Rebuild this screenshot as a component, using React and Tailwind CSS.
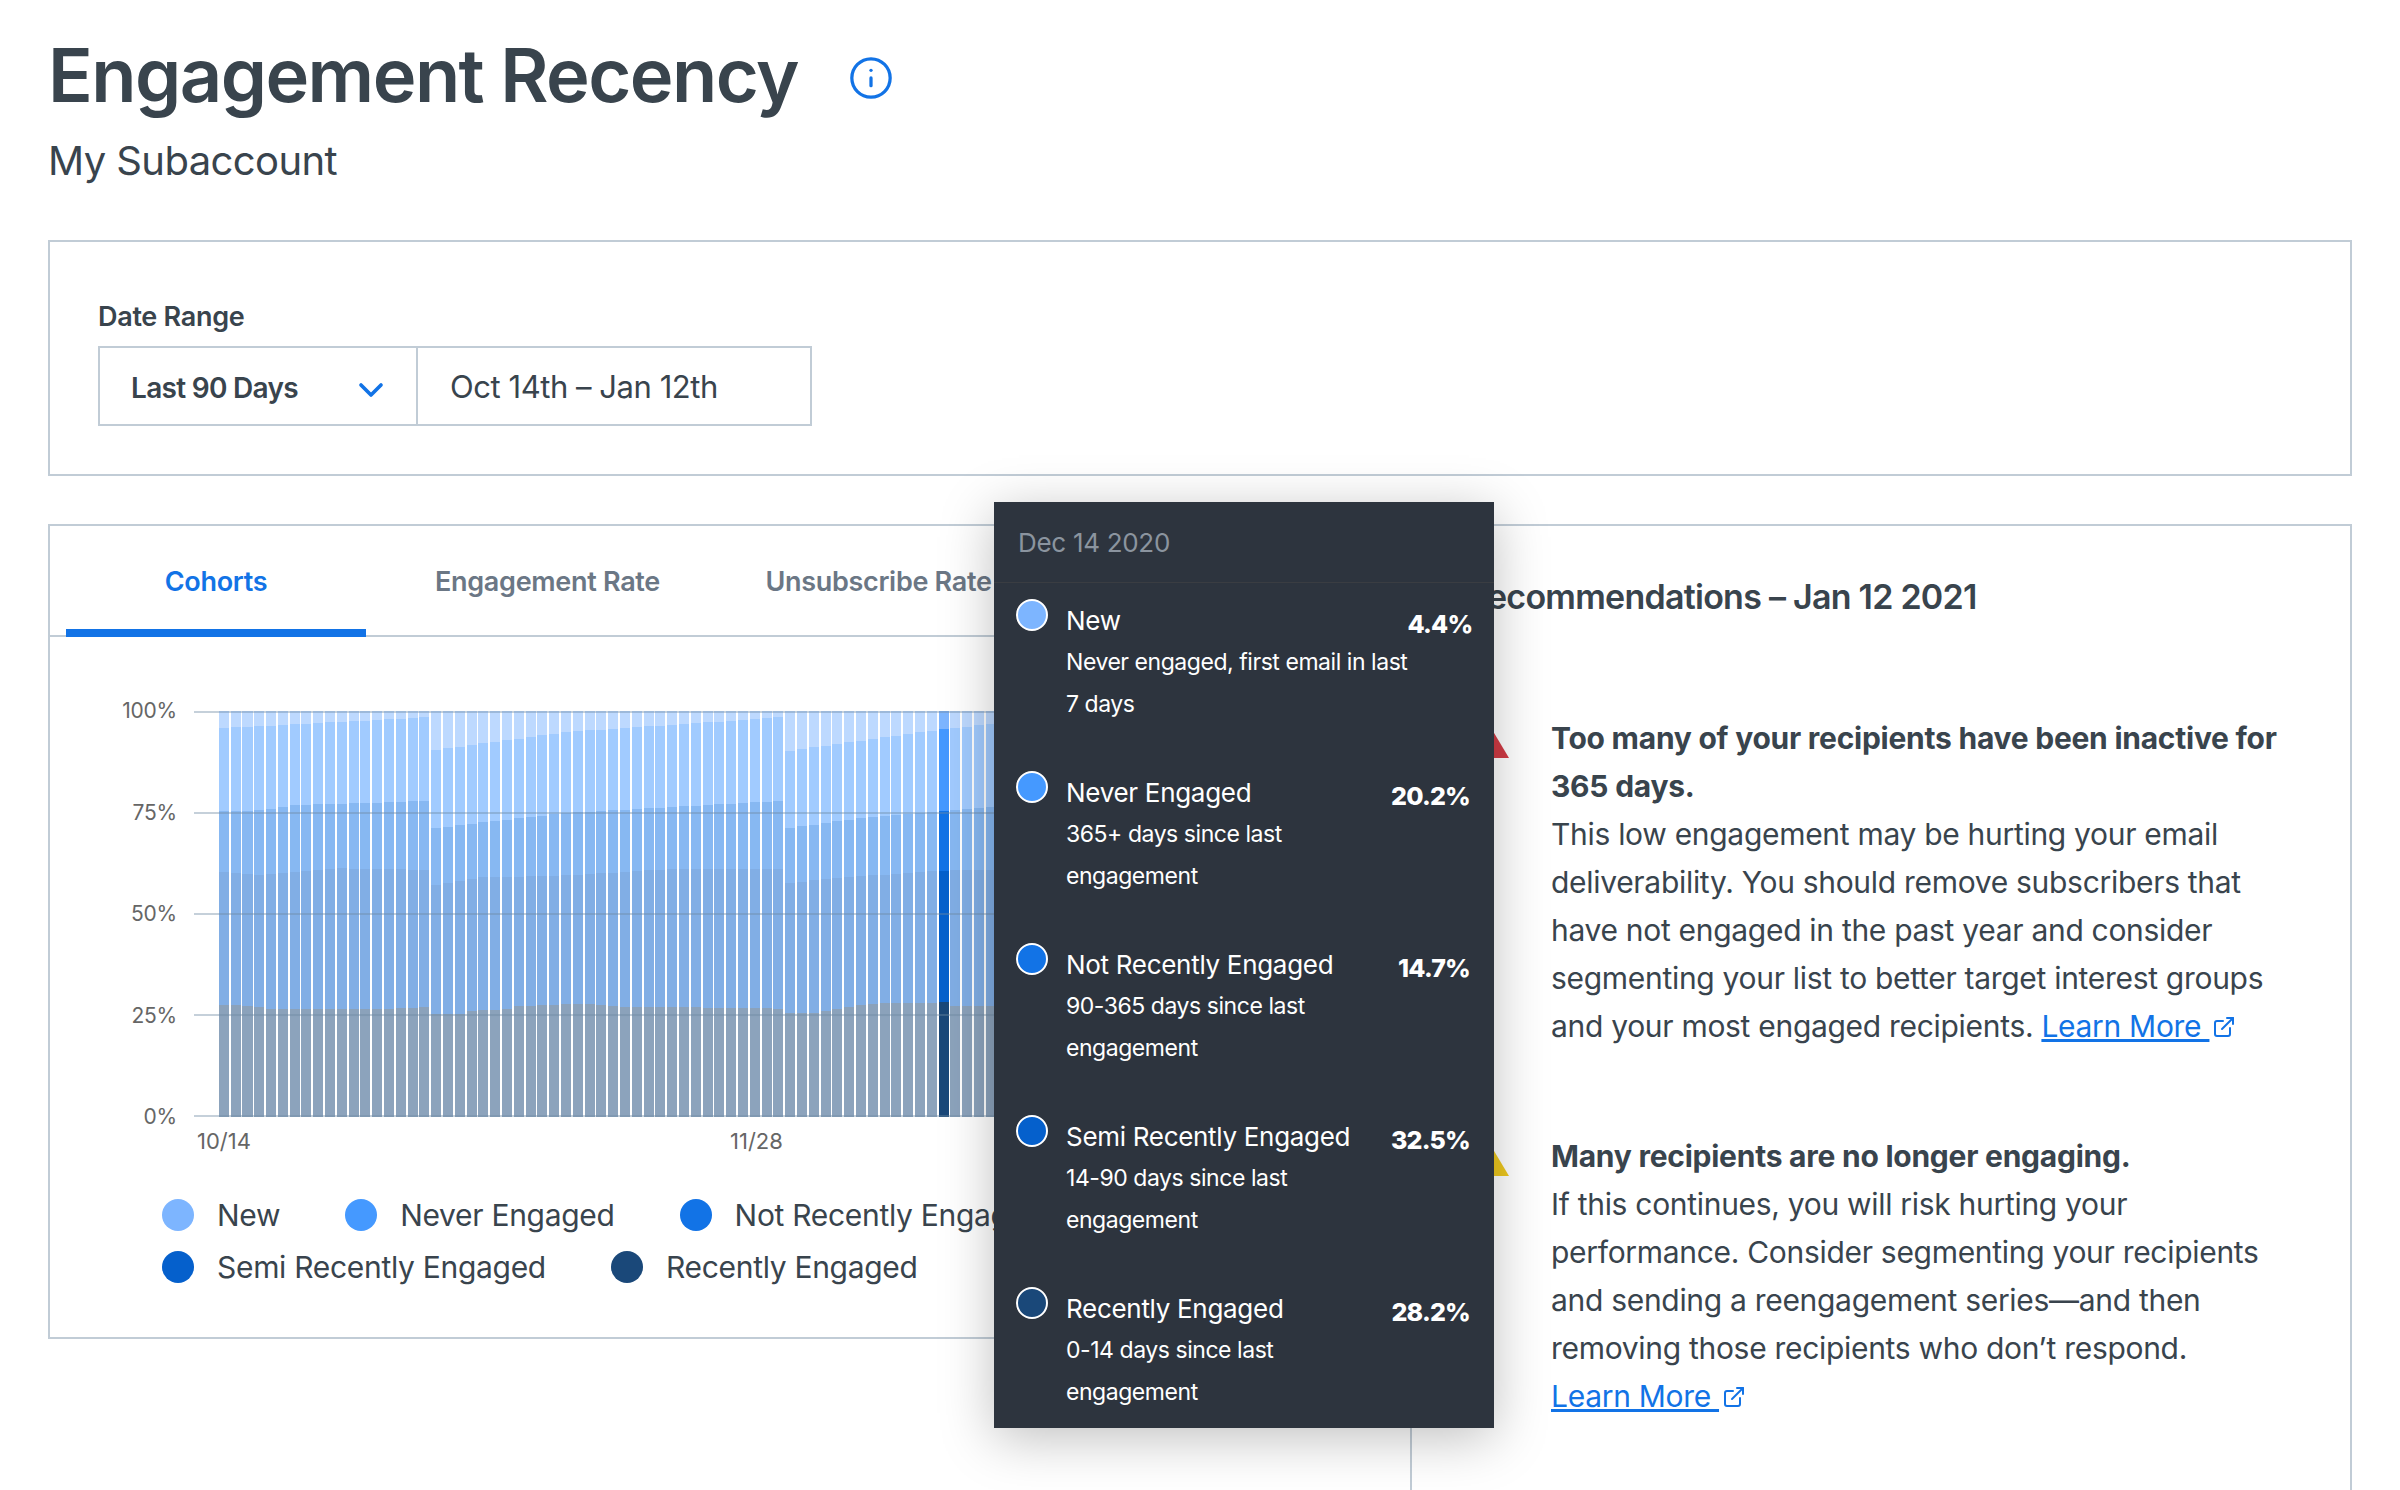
import { ChevronDown, ExternalLink, Info } from 'lucide-react';

const LEGEND = [
    { name: 'New', color: 'bg-[#7db5ff]' },
    { name: 'Never Engaged', color: 'bg-[#4599ff]' },
    { name: 'Not Recently Engaged', color: 'bg-[#1273e6]' },
    { name: 'Semi Recently Engaged', color: 'bg-[#0560cc]' },
    { name: 'Recently Engaged', color: 'bg-[#1a4879]' },
];

const TOOLTIP_ROWS = [
    { name: 'New', color: 'bg-[#7db5ff]', pct: '4.4%', lines: ['Never engaged, first email in last', '7 days'] },
    { name: 'Never Engaged', color: 'bg-[#4599ff]', pct: '20.2%', lines: ['365+ days since last', 'engagement'] },
    { name: 'Not Recently Engaged', color: 'bg-[#1273e6]', pct: '14.7%', lines: ['90-365 days since last', 'engagement'] },
    { name: 'Semi Recently Engaged', color: 'bg-[#0560cc]', pct: '32.5%', lines: ['14-90 days since last', 'engagement'] },
    { name: 'Recently Engaged', color: 'bg-[#1a4879]', pct: '28.2%', lines: ['0-14 days since last', 'engagement'] },
];

// cumulative % from the top of the bar, [day index, value]
const NEW_TOP = [[0, 4.2], [17, 1.6], [18, 9.6], [29, 5.2], [47, 1.6], [48, 9.8], [61, 4.4], [66, 3], [90, 1.5]];
const NEVER_TOP = [[0, 24.7], [3, 24.5], [6, 23.2], [17, 22.2], [18, 28.8], [29, 25.1], [47, 22.2], [48, 28.8], [55, 26], [61, 24.6], [66, 23.5], [90, 22]];
const NOT_TOP = [[0, 39.6], [3, 40.3], [10, 38.8], [17, 39.1], [18, 42.9], [22, 41], [29, 40.5], [38, 38.9], [47, 38.9], [48, 42.4], [52, 41.1], [61, 39.3], [66, 39], [90, 39]];
const RECENT = [[0, 27.6], [3, 27.2], [4, 26.7], [13, 26.6], [17, 27], [18, 25.3], [20, 25.3], [21, 26.1], [24, 26.6], [25, 27.3], [30, 27.9], [34, 27.2], [40, 27], [47, 26.7], [48, 25.5], [50, 25.7], [52, 26.7], [55, 27.9], [61, 28.2], [62, 27.4], [90, 27.4]];

function interp(points, i) {
    for (let p = 1; p < points.length; p++) {
        if (i <= points[p][0]) {
            const [x0, y0] = points[p - 1];
            const [x1, y1] = points[p];
            return y0 + ((i - x0) / (x1 - x0)) * (y1 - y0);
        }
    }
    return points[points.length - 1][1];
}

const BARS = Array.from({ length: 91 }, (_, i) => {
    const a = interp(NEW_TOP, i);
    const b = interp(NEVER_TOP, i);
    const c = interp(NOT_TOP, i);
    const r = interp(RECENT, i);
    return [a, b - a, c - b, 100 - c - r, r];
});

const SEGMENT_COLORS = ['bg-[#7db5ff]', 'bg-[#4599ff]', 'bg-[#1273e6]', 'bg-[#0560cc]', 'bg-[#1a4879]'];

function Chart() {
    return (
        <div className="flex pt-[74px] pr-[50px]">
            <div className="w-[111px] h-[406px] flex flex-col justify-between items-end text-[21px] tracking-[-0.2px] text-[#666]">
                {['100%', '75%', '50%', '25%', '0%'].map((label) => (
                    <div key={label} className="h-0 flex items-center">{label}</div>
                ))}
            </div>
            <div className="ml-[17px] flex-1">
                <div className="relative h-[406px] pl-[24px]">
                    <div className="flex h-full w-[1074px]">
                        {BARS.map((segs, i) => (
                            <div key={i} className={`flex-1 mx-[0.9px] flex flex-col ${i === 61 ? '' : 'opacity-50'}`}>
                                {segs.map((s, j) => (
                                    <div key={j} className={SEGMENT_COLORS[j]} style={{ height: `${s}%` }} />
                                ))}
                            </div>
                        ))}
                    </div>
                    <div className="absolute inset-0 flex flex-col justify-between">
                        {[0, 1, 2, 3, 4].map((i) => (
                            <div key={i} className="h-[2px] bg-[#6f8aa3]/40" />
                        ))}
                    </div>
                </div>
                <div className="relative h-[50px] text-[22px] text-[#666]">
                    <span className="absolute left-[3px] top-[8px]">10/14</span>
                    <span className="absolute left-[536px] top-[8px]">11/28</span>
                </div>
            </div>
        </div>
    );
}

function Tooltip() {
    return (
        <div className="absolute left-[994px] top-[502px] w-[500px] h-[926px] bg-[#2d343e] text-white shadow-[0_10px_50px_rgba(0,0,0,0.25)]">
            <div className="h-[81px] pl-[24px] flex items-center border-b border-[#3a3d42] text-[26px] text-[#8b949f] tracking-[-0.3px]">Dec 14 2020</div>
            <div className="pt-[16px] pl-[22px] pr-[24px] flex flex-col gap-[46px]">
                {TOOLTIP_ROWS.map((row) => (
                    <div key={row.name} className="flex">
                        <div className={`shrink-0 w-[32px] h-[32px] rounded-full border-2 border-white ${row.color}`} />
                        <div className="ml-[18px] flex-1">
                            <div className="h-[42px] leading-[44px] text-[26px] tracking-[-0.3px]">{row.name}</div>
                            {row.lines.map((line) => (
                                <div key={line} className="h-[42px] leading-[42px] text-[23px] tracking-[-0.45px] whitespace-nowrap">{line}</div>
                            ))}
                        </div>
                        <div className="mt-[4px] h-[42px] leading-[42px] text-[25px] font-extrabold tracking-[-0.8px]">{row.pct}</div>
                    </div>
                ))}
            </div>
        </div>
    );
}

function Warning({ color }) {
    return (
        <svg width="43" height="36" viewBox="0 0 43 36" className="shrink-0 mt-[8px]">
            <path d="M21.5 0 L43 36 L0 36 Z" fill={color} />
        </svg>
    );
}

function LearnMore() {
    return (
        <a className="text-[#1273e6] whitespace-nowrap">
            <span className="underline">Learn More </span>
            <ExternalLink size={24} strokeWidth={2} className="inline-block ml-[3px] mb-[3px]" />
        </a>
    );
}

export default function App() {
    return (
        <div className="relative h-[1490px] overflow-hidden bg-white px-[48px] text-[#39444d] font-['Inter',sans-serif]">
            <div className="pt-[25px] flex items-center">
                <h1 className="text-[74px] leading-[100px] font-semibold tracking-[-1.55px]">Engagement Recency</h1>
                <Info size={46} strokeWidth={1.7} className="ml-[50px] mt-[5px] text-[#1273e6]" />
            </div>
            <div className="mt-[11px] text-[40px] leading-[50px] tracking-[-0.6px]">My Subaccount</div>

            <div className="mt-[54px] h-[236px] border-2 border-[#c1ccd6] pt-[55px] pl-[48px]">
                <div className="text-[27px] leading-[40px] font-semibold tracking-[-0.3px]">Date Range</div>
                <div className="mt-[9px] flex w-[714px] h-[80px] border-2 border-[#c1ccd6]">
                    <div className="w-[318px] flex items-center justify-between pl-[31px] pr-[25px] pt-[3px] border-r-2 border-[#c1ccd6] text-[28px] font-semibold tracking-[-0.7px]">
                        <span>Last 90 Days</span>
                        <ChevronDown size={40} strokeWidth={2.2} className="mt-[4px] text-[#1273e6]" />
                    </div>
                    <div className="flex-1 flex items-center pl-[32px] pt-[2px] text-[31px] tracking-[-0.45px]">Oct 14th – Jan 12th</div>
                </div>
            </div>

            <div className="mt-[48px] flex items-start">
                <div className="w-[1362px] h-[815px] border-2 border-[#c1ccd6] pl-[16px]">
                    <div className="flex h-[111px] -ml-[16px] pl-[16px] pt-[3px] border-b-2 border-[#c1ccd6] text-[27px] font-semibold tracking-[-0.3px]">
                        <div className="w-[300px] h-[108px] flex items-center justify-center pt-[6px] text-[#1273e6] border-b-[8px] border-[#1273e6]">Cohorts</div>
                        <div className="ml-[16px] w-[331px] flex items-center justify-center text-[#6b7785]">Engagement Rate</div>
                        <div className="w-[331px] flex items-center justify-center text-[#6b7785]">Unsubscribe Rate</div>
                    </div>
                    <Chart />
                    <div className="mt-[30px] pl-[96px] w-[1150px] flex flex-wrap gap-x-[65px] gap-y-[16px]">
                        {LEGEND.map((item) => (
                            <div key={item.name} className="flex items-center h-[36px] text-[30px] tracking-[-0.3px] whitespace-nowrap">
                                <span className={`w-[32px] h-[32px] rounded-full mr-[23px] ${item.color}`} />
                                {item.name}
                            </div>
                        ))}
                    </div>
                </div>
                <div className="flex-1 h-[1100px] border-2 border-[#c1ccd6] pl-[54px] pr-[50px]">
                    <h2 className="mt-[47px] text-[34px] leading-[48px] font-semibold tracking-[-0.75px] whitespace-nowrap">Recommendations – Jan 12 2021</h2>
                    <div className="mt-[93px] flex gap-[42px] text-[30px] leading-[48px] tracking-[-0.3px]">
                        <Warning color="#d13b45" />
                        <p>
                            <b className="font-bold tracking-[-0.25px]">Too many of your recipients have been inactive for 365 days.</b><br />
                            This low engagement may be hurting your email deliverability. You should remove subscribers that have not engaged in the past year and consider segmenting your list to better target interest groups and your most engaged recipients. <LearnMore />
                        </p>
                    </div>
                    <div className="mt-[82px] flex gap-[42px] text-[30px] leading-[48px] tracking-[-0.3px]">
                        <Warning color="#eec81f" />
                        <p>
                            <b className="font-bold tracking-[-0.25px]">Many recipients are no longer engaging.</b><br />
                            If this continues, you will risk hurting your performance. Consider segmenting your recipients and sending a reengagement series—and then removing those recipients who don’t respond. <LearnMore />
                        </p>
                    </div>
                </div>
            </div>
            <Tooltip />
        </div>
    );
}
